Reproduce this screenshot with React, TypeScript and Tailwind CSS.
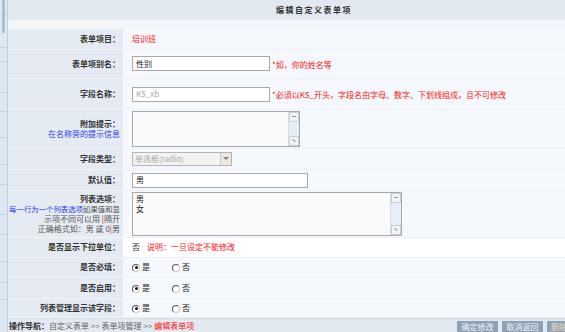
const font = { fontFamily: '"Noto Sans CJK SC", "Liberation Sans", sans-serif' };

function Row({
  label,
  h,
  white,
  children,
}: {
  label: React.ReactNode;
  h: string;
  white?: boolean;
  children?: React.ReactNode;
}) {
  return (
    <div className={`flex ${h}`}>
      <div className="w-[115px] shrink-0 bg-[#e4ebf2] border-b border-[#f3f6f9] flex flex-col justify-center items-end pr-[3px] text-right whitespace-nowrap">
        {label}
      </div>
      <div
        className={`flex-1 flex items-center pl-[9px] border-b border-[#edf1f6] ${
          white ? 'bg-white' : 'bg-[#f5f8fc]'
        }`}
      >
        {children}
      </div>
    </div>
  );
}

function Label({ children }: { children: React.ReactNode }) {
  return <span className="font-bold text-[#333] leading-[10px]">{children}</span>;
}

function Hint({ children }: { children: React.ReactNode }) {
  return <span className="text-[#f11] ml-[2px] mt-[2px]">{children}</span>;
}

function Input({ w, value, muted }: { w: string; value: string; muted?: boolean }) {
  return (
    <div
      className={`${w} h-[15px] border border-[#a4a9af] bg-white flex items-center px-[3px] ${
        muted ? 'text-[#aaa]' : 'text-[#222]'
      }`}
    >
      {value}
    </div>
  );
}

function TextBox({ w, h, lines }: { w: string; h: string; lines: string[] }) {
  return (
    <div className={`${w} ${h} border border-[#a4a9af] bg-[#fafafa] flex`}>
      <div className="flex-1 px-[3px] pt-[1px] leading-[10px] text-[#222]">
        {lines.map((l) => (
          <div key={l}>{l}</div>
        ))}
      </div>
      <div className="w-[11px] flex flex-col bg-[#e6eef9] border-l border-[#d6dde6]">
        <div className="h-[10px] border border-[#c9cfd6] bg-[#f1f3f5] flex items-center justify-center">
          <span className="w-[4px] h-[1px] bg-[#999]" />
        </div>
        <div className="flex-1" />
        <div className="h-[10px] border border-[#c9cfd6] bg-[#f1f3f5] flex items-center justify-center">
          <span className="w-[4px] h-[1px] bg-[#999] rotate-45" />
        </div>
      </div>
    </div>
  );
}

function Radio({ checked, text }: { checked?: boolean; text: string }) {
  return (
    <div className="flex items-center w-[40px] text-[#222]">
      <span className="w-[8px] h-[8px] rounded-full border border-t-[#555] border-l-[#555] border-b-[#ccc] border-r-[#ccc] bg-white flex items-center justify-center mr-[2px] mt-[1px]">
        {checked && <span className="w-[3px] h-[3px] rounded-full bg-[#111]" />}
      </span>
      {text}
    </div>
  );
}

const stripLines = ['h-[15px]', 'h-[33px]', 'h-[14px]', 'h-[31px]', 'h-[19px]', 'h-[26px]', 'h-[27px]', 'h-[20px]', 'h-[30px]', 'h-[20px]', 'h-[27px]', 'h-[21px]', 'h-[17px]'];

export default function App() {
  return (
    <div className="w-[565px] h-[332px] overflow-hidden flex bg-[#f5f8fc] text-[8px]" style={font}>
      <div className="w-[8px] shrink-0 relative bg-[#dce8f3] border-r border-[#bfcedd] flex flex-col">
        {stripLines.map((h, i) => (
          <div key={i} className={`${h} border-b border-[#c6d5e4]`} />
        ))}
        <div className="absolute left-[2px] top-0 w-[3px] h-[33px] bg-[#aebfce] rounded-b-[1px]" />
      </div>
      <div className="w-[612px] shrink-0 flex flex-col">
        <div className="h-[20px] bg-[#e2e9f1] flex items-center justify-center font-bold text-[#333] tracking-[1.5px]">
          编辑自定义表单项
        </div>
        <div className="h-[9px] bg-[#f2f5f9]" />
        <Row label={<Label>表单项目：</Label>} h="h-[21px]">
          <span className="text-[#f11]">培训班</span>
        </Row>
        <Row label={<Label>表单项别名：</Label>} h="h-[30px]">
          <Input w="w-[138px]" value="性别" />
          <Hint>*如，你的姓名等</Hint>
        </Row>
        <Row label={<Label>字段名称：</Label>} h="h-[31px]">
          <Input w="w-[138px]" value="KS_xb" muted />
          <Hint>*必须以KS_开头，字段名由字母、数字、下划线组成，且不可修改</Hint>
        </Row>
        <Row
          label={
            <>
              <Label>附加提示：</Label>
              <span className="text-[#2b3cf2] leading-[10px]">在名称旁的提示信息</span>
            </>
          }
          h="h-[39px]"
        >
          <TextBox w="w-[168px]" h="h-[36px]" lines={[]} />
        </Row>
        <Row label={<Label>字段类型：</Label>} h="h-[22px]">
          <div className="w-[100px] h-[14px] border border-[#b5b5b5] bg-[#f3f3f3] flex items-center text-[#aaa]">
            <span className="flex-1 pl-[2px]">单选框(radio)</span>
            <span className="w-[11px] h-[12px] border-l border-[#c8c8c8] bg-[#ebe8df] flex items-center justify-center">
              <span className="border-x-[3px] border-x-transparent border-t-[3px] border-t-[#888]" />
            </span>
          </div>
        </Row>
        <Row label={<Label>默认值：</Label>} h="h-[21px]">
          <Input w="w-[176px]" value="男" />
        </Row>
        <Row
          label={
            <div className="leading-[10px] text-[#555]">
              <div>
                <Label>列表选项：</Label>
              </div>
              <div className="text-[7.4px]">
                <span className="text-[#2b3cf2]">每一行为一个列表选项</span>如果值和显
              </div>
              <div>
                示项不同可以用 <span className="text-[#f11]">|</span>隔开
              </div>
              <div>
                正确格式如：男 或 0<span className="text-[#f11]">|</span>男
              </div>
            </div>
          }
          h="h-[47px]"
        >
          <TextBox w="w-[270px]" h="h-[44px]" lines={['男', '女']} />
        </Row>
        <Row label={<Label>是否显示下拉单位：</Label>} h="h-[20px]" white>
          <span className="text-[#333]">否</span>
          <span className="text-[#f11] ml-[7px]">说明：一旦设定不能修改</span>
        </Row>
        <Row label={<Label>是否必填：</Label>} h="h-[21px]">
          <Radio checked text="是" />
          <Radio text="否" />
        </Row>
        <Row label={<Label>是否启用：</Label>} h="h-[21px]">
          <Radio checked text="是" />
          <Radio text="否" />
        </Row>
        <Row label={<Label>列表管理显示该字段：</Label>} h="h-[19px]">
          <Radio checked text="是" />
          <Radio text="否" />
        </Row>
        <div className="h-[14px] bg-[#e2e9f1] border-t border-[#d3dce6] flex items-start pt-[1px]">
          <span className="font-bold text-[#333] ml-[1px]">操作导航：</span>
          <span className="text-[#666]">自定义表单 &gt;&gt; 表单项管理 &gt;&gt; </span>
          <span className="text-[#f11] ml-[2px]">编辑表单项</span>
          <div className="ml-auto flex gap-[4px] pr-[33px] mt-[1px]">
            <span className="w-[41px] h-[14px] bg-[#8ea2b7] text-[#eef2f6] flex justify-center">确定修改</span>
            <span className="w-[41px] h-[14px] bg-[#8ea2b7] text-[#eef2f6] flex justify-center">取消返回</span>
            <span className="w-[40px] h-[14px] bg-[#8ea2b7] text-[#e9dfbf] flex justify-center">删除此项</span>
          </div>
        </div>
      </div>
    </div>
  );
}
